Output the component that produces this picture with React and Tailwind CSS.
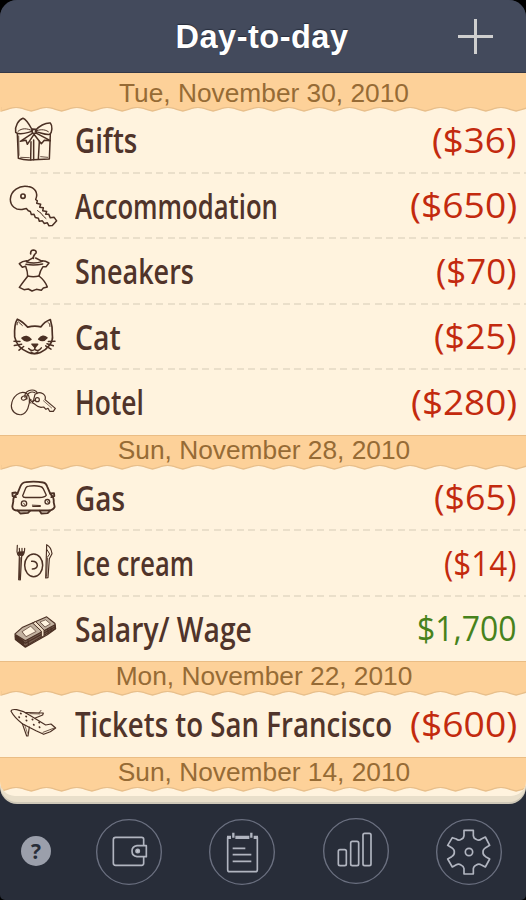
import { useLayoutEffect, useRef, useState } from 'react';

// Squeezes a line of text to a fixed width, the way the handwritten labels run narrow
function FitText({ width, origin = 'left', className = '', children }) {
  const ref = useRef(null);
  const [scale, setScale] = useState(1);

  useLayoutEffect(() => {
    setScale(width / ref.current.offsetWidth);
  }, [width, children]);

  return (
    <span
      ref={ref}
      className={`inline-block whitespace-nowrap ${className}`}
      style={{ transform: `scaleX(${scale})`, transformOrigin: origin }}
    >
      {children}
    </span>
  );
}

const ICONS = {
  gift: {
    viewBox: '0 -9 225 196.5',
    art: (
      <>
        <path d="M52 72 L55 145 Q76 152 100 149 L148 147 L151 73" />
        <path d="M93 95 L92 149 M101 90 L101 149 M118 94 L115 148" />
        <path d="M98 62 C90 48 80 28 69 25 C56 29 44 48 47 67 C60 78 82 67 97 64" />
        <path d="M106 62 C116 48 136 38 151 39 C158 47 157 67 149 73 C133 75 119 66 106 65" />
        <path d="M54 64 C66 53 82 55 96 62 M145 65 C132 56 118 59 107 63" strokeWidth="3" />
        <path d="M96 57 L108 58 L109 70 L97 70 Z M97 70 L61 94 L78 91 L82 103 L102 73 L124 101 L133 91 L151 92 L110 70" />
        <path d="M56 78 L57 136 M62 142 L88 143 M122 140 L143 142" strokeWidth="2.5" />
      </>
    ),
  },
  key: {
    viewBox: '0 187.5 225 196.5',
    art: (
      <>
        <path d="M107 267 C116 246 104 231 84 228 C58 223 32 241 31 266 C31 287 48 299 66 297 L79 294 L85 301 L91 303 L94 312 L102 311 L106 321 L115 323 L118 332 L127 331 L133 339 L142 337 L147 346 L157 345 L170 331 L162 320 L151 322 L146 311 L137 311 L140 303 L128 301 L130 292 L119 290 L122 281 L110 278 L112 271 Z" />
        <path d="M112 300 L123 308 L130 317 L138 324" strokeWidth="3" />
        <circle cx="69" cy="257" r="6.5" strokeWidth="5" />
      </>
    ),
  },
  dress: {
    viewBox: '0 9 225 196.5',
    art: (
      <>
        <path d="M92 57 Q91 45 101 45 Q110 46 108 54 Q99 62 100 70" strokeWidth="5" />
        <path d="M100 68 L79 80 Q102 88 127 79 L107 69" />
        <path d="M80 77 Q67 78 58 86 L67 97 L77 94 Q83 110 83 124 Q69 142 58 157 L72 164 L85 162 L96 168 L109 163 L124 166 L130 159 L142 156 Q135 137 117 123 Q121 106 129 95 L138 95 L147 84 Q136 77 126 77" />
        <path d="M83 123 Q100 127 117 123 M78 88 Q101 93 128 87" />
      </>
    ),
  },
  cat: {
    viewBox: '0 205.5 225 196.5',
    art: (
      <>
        <path d="M44 304 C43 284 43 264 52 251 Q67 257 83 275 Q103 269 123 274 Q133 259 151 252 Q158 273 157 298 C161 320 142 342 121 351 Q102 359 84 350 Q51 337 44 304" strokeWidth="5" />
        <path d="M51 268 Q50 260 55 259 L67 270 M145 261 Q151 264 150 273" strokeWidth="3" />
        <path d="M66 308 Q80 296 93 312 Q78 322 66 308 Z M116 311 Q128 296 141 307 Q130 321 116 311 Z" fill="currentColor" />
        <path d="M96 326 L113 326 L105 336 Z" fill="currentColor" />
        <path d="M105 335 L104 342 Q95 349 86 339 M105 342 Q114 350 124 337 M93 350 Q104 358 114 350" />
        <path d="M42 317 L60 318 M43 330 L65 326 M57 344 L71 333 M165 317 L145 318 M160 331 L141 325 M153 341 L137 331" />
      </>
    ),
  },
  keys: {
    viewBox: '0 27 225 196.5',
    art: (
      <g strokeWidth="3.5">
        <path d="M81 101 C61 88 36 110 34 137 C34 154 48 166 64 164 C81 161 91 134 88 114 Q87 105 81 101" />
        <ellipse cx="72" cy="114" rx="8" ry="6" transform="rotate(-25 72 114)" />
        <path d="M75 112 C72 93 96 85 108 94 Q112 97 111 101 M81 117 C77 99 94 93 105 98" />
        <path d="M89 116 Q93 130 105 120 M93 119 Q84 126 93 129" />
        <path d="M105 103 Q115 94 129 101 Q139 108 135 119 L166 145 L160 154 L149 154 L144 145 L138 148 L131 141 L123 142 Q112 140 105 133 L97 128 L101 119 Z" />
        <circle cx="112" cy="119" r="6" />
        <path d="M130 122 L155 144" strokeWidth="2" />
      </g>
    ),
  },
  car: {
    viewBox: '0 -16.5 225 196.5',
    art: (
      <g strokeWidth="5.5">
        <path d="M52 70 L61 48 Q66 36 77 35 Q103 31 130 36 Q138 37 142 49 L151 70 Q163 81 161 95 L164 109 Q160 120 144 120 L54 120 Q38 121 37 108 L40 92 Q38 80 52 70" />
        <path d="M68 76 L77 53 Q80 47 87 47 Q105 44 121 48 Q127 49 130 55 L139 74 Q134 81 119 81 L76 81 Q69 81 68 76 Z" strokeWidth="4" />
        <path d="M52 70 L47 66 L37 67 L38 77 L48 80 M151 69 L162 68 L163 77 L154 80" />
        <circle cx="72" cy="99" r="8" strokeWidth="4" />
        <circle cx="142" cy="94" r="7" strokeWidth="4" />
        <path d="M97 104 L121 105 M98 108 L121 108" strokeWidth="3" />
        <path d="M53 120 L61 129 L84 127 L90 121 M119 121 L124 129 L143 128 L150 121" />
        <path d="M71 98 L74 102 M143 93 L145 97" strokeWidth="3" />
      </g>
    ),
  },
  plate: {
    viewBox: '0 180 225 196.5',
    art: (
      <>
        <path d="M52 226 L51 245 Q52 255 58 259 L56 329 L61 330 L65 259 Q74 254 74 235 M58 235 L59 248 M66 235 L66 248" strokeWidth="3.5" />
        <path d="M56 247 L71 246 L67 256 L57 255 Z" fill="currentColor" />
        <path d="M60 263 L59 325" strokeWidth="4" />
        <ellipse cx="101" cy="286" rx="27" ry="34" />
        <path d="M95 274 Q111 273 112 287 Q110 297 97 297" />
        <path d="M140 224 Q153 230 156 251 L148 266 L144 323 L137 324 Z" strokeWidth="3.5" />
        <path d="M141 239 L149 252 L142 262 M142 265 L140 319" strokeWidth="3" />
      </>
    ),
  },
  money: {
    viewBox: '0 1.5 225 196.5',
    art: (
      <g strokeWidth="3.5">
        <path d="M45 115 L68 95 L140 64 L165 84 L167 100 L142 118 L76 155 L46 132 Z" fill="#4b302455" />
        <path d="M47 118 L76 136 L165 88 L166 99 L76 153 L48 131 Z" fill="#4b3024aa" />
        <path d="M46 124 L76 143 L166 94" />
        <path d="M67 108 L92 92 L108 108 L79 123 Z M121 79 L137 73 L151 85 L136 94 Z" fill="#fff3de" strokeWidth="2" />
        <path d="M99 82 L107 78 L132 104 L132 121 L124 126 L124 108 Z" fill="#f1e0c8" strokeWidth="3" />
        <path d="M48 121 L70 137 L70 148 L49 131 Z" fill="currentColor" />
        <path d="M143 102 L145 113 M153 97 L154 108 M84 134 L85 146" />
      </g>
    ),
  },
  plane: {
    viewBox: '0 288 225 196.5',
    art: (
      <g strokeWidth="3.5">
        <path d="M33 349 Q34 342 50 344 Q72 348 88 360 L137 390 L153 387 L167 399 L151 410 L131 418 L108 407 L67 386 Q44 369 33 349 Z" />
        <path d="M77 353 L130 354 L128 360 L106 369 M67 386 L80 423 L84 423 L88 396" />
        <path d="M129 412 L163 399 M117 354 L123 346" strokeWidth="2.5" />
        <path d="M62 355 l1 1 M57 366 l1 1 M78 364 l1 1 M79 376 l1 1 M97 373 l1 1 M101 389 l1 1 M117 382 l1 1 M118 396 l1 1" strokeWidth="5" />
        <path d="M74 389 L82 414 M90 356 L119 357" strokeWidth="2" />
      </g>
    ),
  },
};

const SECTIONS = [
  {
    date: 'Tue, November 30, 2010',
    rows: [
      { icon: 'gift', name: 'Gifts', nameWidth: 62, amount: '($36)', amountWidth: 85 },
      { icon: 'key', name: 'Accommodation', nameWidth: 203, amount: '($650)', amountWidth: 107 },
      { icon: 'dress', name: 'Sneakers', nameWidth: 119, amount: '($70)', amountWidth: 81 },
      { icon: 'cat', name: 'Cat', nameWidth: 46, amount: '($25)', amountWidth: 83 },
      { icon: 'keys', name: 'Hotel', nameWidth: 69, amount: '($280)', amountWidth: 106 },
    ],
  },
  {
    date: 'Sun, November 28, 2010',
    rows: [
      { icon: 'car', name: 'Gas', nameWidth: 50, amount: '($65)', amountWidth: 83 },
      { icon: 'plate', name: 'Ice cream', nameWidth: 119, amount: '($14)', amountWidth: 73 },
      { icon: 'money', name: 'Salary/ Wage', nameWidth: 177, amount: '$1,700', amountWidth: 100, income: true },
    ],
  },
  {
    date: 'Mon, November 22, 2010',
    rows: [
      { icon: 'plane', name: 'Tickets to San Francisco', nameWidth: 317, amount: '($600)', amountWidth: 107 },
    ],
  },
  { date: 'Sun, November 14, 2010', rows: [] },
];

// Torn lower edge of a date strip, one scallop every 30.3px
const WAVE = Array.from({ length: 18 }, () => 'c5 -0.8 10 -3.6 15.15 -3.6 s10.15 2.8 15.15 3.6').join(' ');

function DateStrip({ date, first }) {
  return (
    <div className={`relative z-10 bg-[#fdd199] flex justify-center pl-[2px] shrink-0 ${first ? 'h-[34px] pt-[4.5px]' : 'h-[30px] border-t border-[#eabd85]'}`}>
      <span className={`text-[26.3px] text-[#966b35] ${first ? 'leading-[30px]' : 'leading-[28px]'}`}>{date}</span>
      <svg className="absolute left-0 top-full -mt-px" width="526" height="7" viewBox="0 0 526 7">
        <path d={`M1 0 V5 ${WAVE} V0 Z`} fill="#fdd199" stroke="#e8bf8b" strokeWidth="1.3" />
        <path d="M0 0 H526 M0.5 0 V5" stroke="#fdd199" strokeWidth="2" />
      </svg>
    </div>
  );
}

function EntryRow({ row, last }) {
  const icon = ICONS[row.icon];
  return (
    <div className="relative h-[65.5px] flex items-center justify-between pr-[9px] shrink-0">
      <div className="flex items-center">
        <svg
          className="w-[75px] h-[65.5px] shrink-0 text-[#4b3024]"
          viewBox={icon.viewBox}
          fill="none"
          stroke="currentColor"
          strokeWidth="4.5"
          strokeLinecap="round"
          strokeLinejoin="round"
        >
          {icon.art}
        </svg>
        <div className="w-0 pt-[3px]">
          <FitText width={row.nameWidth} className="text-[34px] leading-none font-semibold text-[#50342a]">
            {row.name}
          </FitText>
        </div>
      </div>
      <FitText
        width={row.amountWidth}
        origin="right"
        className={`text-[34.5px] leading-none font-medium ${row.income ? 'text-[#47821c]' : 'text-[#c32a0e]'}`}
      >
        {row.amount}
      </FitText>
      {!last && (
        <div className="absolute left-[30px] right-0 -bottom-px h-[2px] bg-[repeating-linear-gradient(90deg,#eadfca_0_7px,transparent_7px_11.5px)]" />
      )}
    </div>
  );
}

function TabButton({ viewBox, className = '', children }) {
  return (
    <button className={`size-[66px] shrink-0 ${className}`}>
      <svg className="size-[66px]" viewBox={viewBox} fill="none" stroke="#b1b5c0" strokeWidth="5" strokeLinejoin="round">
        {children}
      </svg>
    </button>
  );
}

export default function App() {
  return (
    <div className="w-[526px] h-[900px] bg-black overflow-hidden font-['Liberation_Sans',Arial,sans-serif]">
      <div className="h-full bg-[#282d39] rounded-t-[17px] rounded-b-[5px] overflow-hidden flex flex-col">
        <header className="relative h-[73px] bg-[#434a5c] border-b border-[#343846] flex items-center justify-center shrink-0">
          <h1 className="text-[32.5px] leading-none tracking-[0.5px] font-bold text-white [text-shadow:0_-1px_1px_#272d3b] -ml-[2px] mt-[2px]">
            Day-to-day
          </h1>
          <button className="absolute right-[33px] top-[19px]">
            <svg width="35" height="35" viewBox="0 0 35 35" stroke="#cfcfcf" strokeWidth="3">
              <path d="M17.5 0 V35 M0 17.5 H35" />
            </svg>
          </button>
        </header>

        {/* Stack of pages, each one peeking out under the other */}
        <div className="h-[731px] bg-[#cfc8b8] rounded-b-[17px] overflow-hidden shrink-0">
          <div className="h-[729px] bg-[#e9dfca] rounded-b-[17px] overflow-hidden">
            <main className="h-[723px] bg-[#fff3de] rounded-b-[15px] overflow-hidden flex flex-col">
              {SECTIONS.map((section, i) => (
                <section key={section.date}>
                  <DateStrip date={section.date} first={i === 0} />
                  <div className="font-['Open_Sans',sans-serif]">
                    {section.rows.map((row, j) => (
                      <EntryRow key={row.name} row={row} last={j === section.rows.length - 1} />
                    ))}
                  </div>
                </section>
              ))}
            </main>
          </div>
        </div>

        <footer className="flex-1 flex items-center pl-[21px]">
          <button className="size-[30px] rounded-full bg-[#9b9fab] text-[#282d39] text-[21px] leading-none font-bold font-['Open_Sans',sans-serif] shrink-0 -mt-[2px]">
            ?
          </button>
          <TabButton viewBox="288 208 198 198" className="ml-[45px]">
            <circle cx="387" cy="307" r="97" stroke="#6b7080" strokeWidth="4" />
            <path d="M431 287 V269 Q431 263 425 263 H347 Q340 263 340 270 V340 Q340 347 347 347 H425 Q431 347 431 341 V322" />
            <path d="M439 288 H411 Q396 290 396 304 Q396 319 411 321 H439 Z" />
            <circle cx="413" cy="304" r="5" fill="#d5d7de" />
          </TabButton>
          <TabButton viewBox="628 208 198 198" className="ml-[47px]">
            <circle cx="727" cy="307" r="97" stroke="#6b7080" strokeWidth="4" />
            <path d="M684 263 V360 Q684 366 690 366 H767 Q773 366 773 360 V263" />
            <path d="M682 263 H694 M707 263 H749 M762 263 H775" strokeWidth="10" />
            <path d="M701 249 V264 M755 249 V264" strokeWidth="7" />
            <path d="M699 296 H737 M699 315 H755 M699 335 H755" />
          </TabButton>
          <TabButton viewBox="181 204 198 198" className="ml-[48px] -mt-[2px]">
            <circle cx="280" cy="303" r="97" stroke="#6b7080" strokeWidth="4" />
            <rect x="227" y="299" width="24" height="48" rx="5" />
            <rect x="264" y="274" width="24" height="73" rx="5" />
            <rect x="301" y="250" width="24" height="97" rx="5" />
          </TabButton>
          <TabButton viewBox="517 208 198 198" className="ml-[47px]">
            <circle cx="616" cy="307" r="97" stroke="#6b7080" strokeWidth="4" />
            <path d="M601 242 H629 V258 Q630 267 638 269 Q646 274 653 268 L665 262 L678 287 L666 294 Q657 300 658 307 Q657 315 666 321 L678 328 L665 352 L652 345 Q645 341 638 346 Q630 349 629 357 V373 H601 V357 Q600 349 592 346 Q585 341 578 345 L566 352 L552 328 L564 321 Q573 315 572 307 Q573 300 564 294 L552 287 L566 264 L578 268 Q585 274 592 269 Q600 267 601 258 Z" />
            <circle cx="616" cy="307" r="11" />
          </TabButton>
        </footer>
      </div>
    </div>
  );
}
